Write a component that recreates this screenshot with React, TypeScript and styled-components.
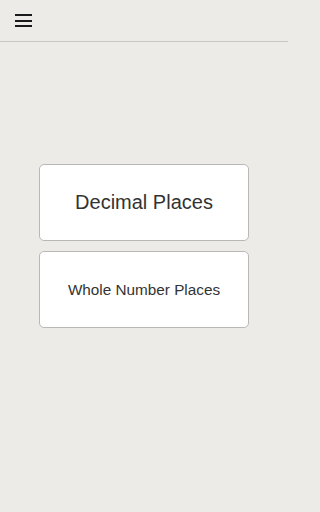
import styled, { createGlobalStyle } from "styled-components";

const GlobalStyle = createGlobalStyle`
  html, body {
    margin: 0;
    padding: 0;
    background: #ecebe8;
  }
  body {
    font-family: "Liberation Sans", Arial, sans-serif;
  }
`;

const Page = styled.div`
  width: 288px;
  height: 512px;
  background: #ecebe8;
  display: flex;
  flex-direction: column;
`;

const Header = styled.div`
  height: 41px;
  border-bottom: 1px solid #c8c7c4;
  display: flex;
  align-items: center;
  padding-left: 15px;
  box-sizing: content-box;
`;

const MenuButton = styled.button`
  width: 17px;
  height: 13px;
  padding: 0;
  border: none;
  background: none;
  display: flex;
  flex-direction: column;
  justify-content: space-between;
  cursor: pointer;
`;

const MenuLine = styled.span`
  display: block;
  width: 17px;
  height: 2px;
  background: #1a1a1a;
`;

const Body = styled.div`
  display: flex;
  flex-direction: column;
  align-items: center;
  gap: 10px;
  padding-top: 122px;
`;

const Choice = styled.button<{ size: number }>`
  width: 210px;
  height: 77px;
  background: #ffffff;
  border: 1px solid #b9b8b5;
  border-radius: 5px;
  box-sizing: border-box;
  display: flex;
  align-items: center;
  justify-content: center;
  font-family: "Liberation Sans", Arial, sans-serif;
  font-size: ${props => props.size}px;
  color: #333333;
  cursor: pointer;
`;

const App = () => {
  const choices = [
    { name: "Decimal Places", size: 20 },
    { name: "Whole Number Places", size: 15.3 },
  ];

  return (
    <Page>
      <GlobalStyle />
      <Header>
        <MenuButton aria-label="menu">
          <MenuLine />
          <MenuLine />
          <MenuLine />
        </MenuButton>
      </Header>
      <Body>
        {choices.map(c => (
          <Choice key={c.name} size={c.size}>
            {c.name}
          </Choice>
        ))}
      </Body>
    </Page>
  );
};

export default App;
